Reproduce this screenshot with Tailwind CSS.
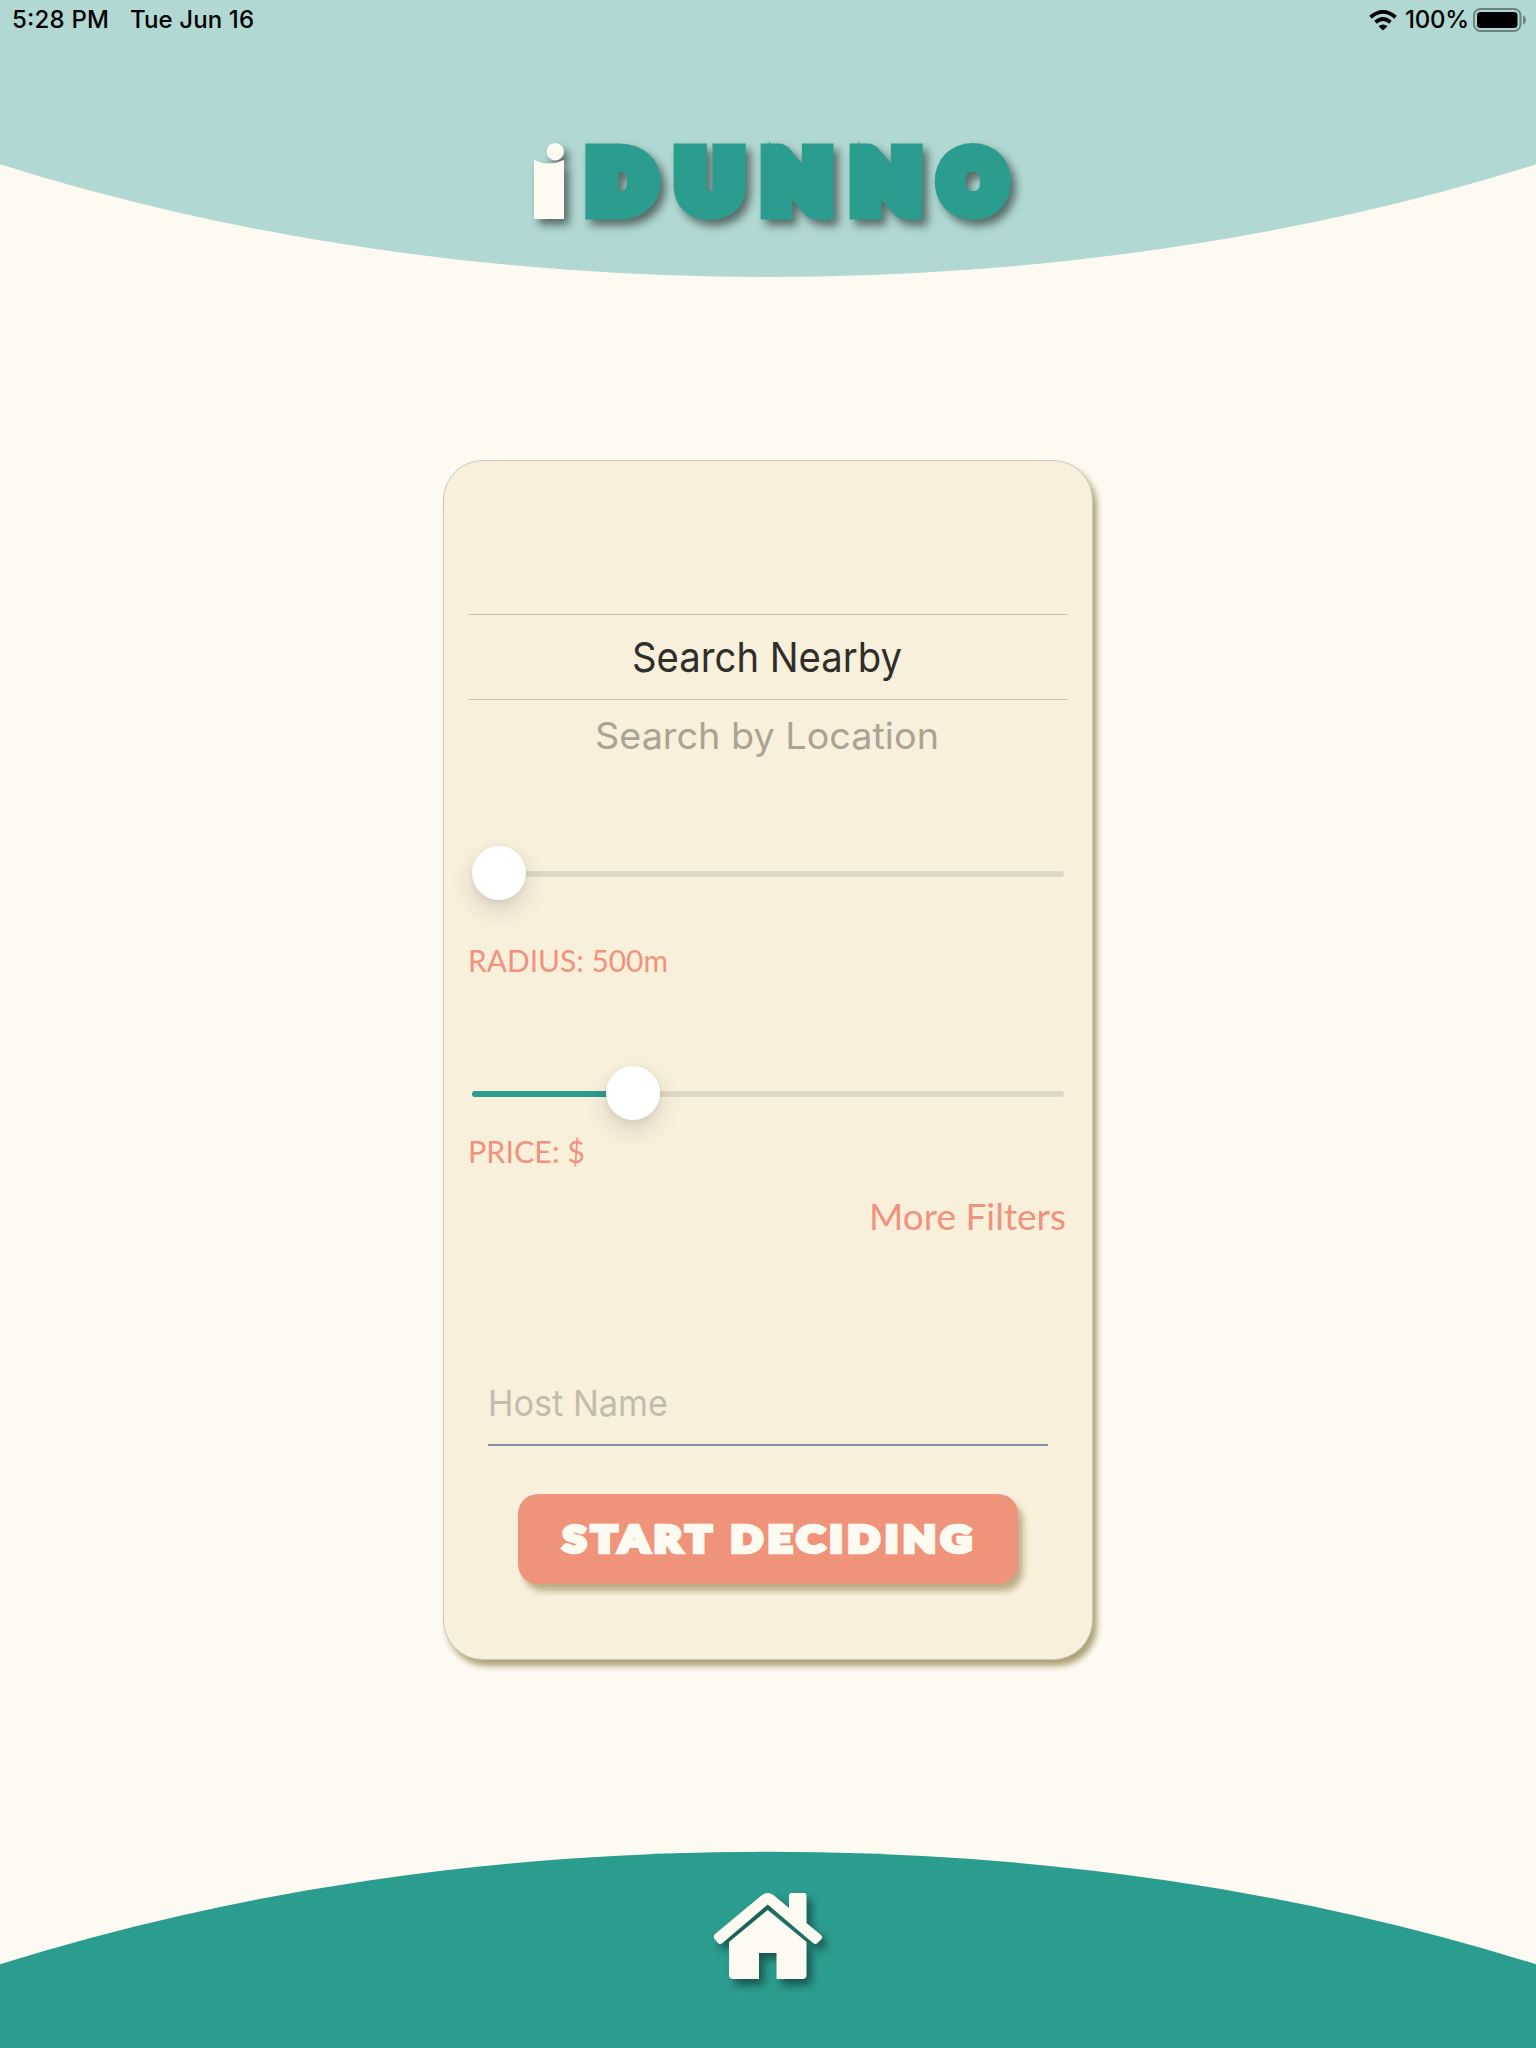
<!DOCTYPE html>
<html lang="en">
<head>
<meta charset="utf-8">
<title>iDunno</title>
<script src="https://cdn.jsdelivr.net/npm/@tailwindcss/browser@4"></script>
</head>
<body class="w-[1536px] h-[2048px] overflow-hidden bg-[#fdfaf2] font-[Inter,sans-serif] flex flex-col items-center">
<header class="relative w-full h-[460px] shrink-0">
  <svg class="absolute inset-0" width="1536" height="460" viewBox="0 0 1536 460">
    <path d="M0 0H1536V164.300A1536 841 0 0 1 0 164.300Z" fill="#b1d8d2"/>
  </svg>
  <div class="relative flex h-10 items-center justify-between pl-[12px] pr-[10px] text-black">
    <svg class="overflow-visible" width="260" height="40"><g font-family="Inter" font-size="24" font-weight="500"><text x="0" y="28" textLength="97">5:28 PM</text><text x="118" y="28" textLength="124">Tue Jun 16</text></g></svg>
    <svg class="overflow-visible" width="160" height="40" viewBox="1366 0 160 40">
      <g fill="none" stroke="#000" stroke-width="3.8"><path d="M1370.500 17.200Q1383 6.500 1395.500 17.200"/><path d="M1375.500 22.300Q1383 15.800 1390.500 22.300"/></g>
      <path d="M1378.500 26.200Q1383 22.800 1387.500 26.200L1383 30.500Z"/>
      <text x="1405" y="28" font-family="Inter" font-size="24" font-weight="500" textLength="64">100%</text>
      <rect x="1474" y="9" width="46.500" height="22" rx="6.500" fill="none" stroke="#6b8480" stroke-width="2"/>
      <rect x="1477" y="12" width="40.500" height="16" rx="3.500"/>
      <path d="M1523 15.500Q1526 17 1526 20T1523 24.500Z" fill="#6b8480"/>
    </svg>
  </div>
  <svg class="absolute left-[500px] top-[120px] overflow-visible [filter:drop-shadow(5px_6px_4px_rgb(0_0_0/0.5))]" width="540" height="130" viewBox="500 120 540 130" font-family="Lato" font-weight="900" font-size="78" stroke-width="19">
    <clipPath id="stem"><path d="M534 160Q549 167 564 160V219H534Z"/></clipPath>
    <g fill="#2b9d8e" stroke="#2b9d8e">
      <text transform="scale(1.08 1)" x="545.6 628 707.8 790.2" y="210.300">DUNN</text>
      <text transform="scale(0.99 1)" x="951" y="210.300">O</text>
    </g>
    <g clip-path="url(#stem)"><text x="537" y="213" font-size="84" fill="#fdfaf2" stroke="#fdfaf2" stroke-width="21">ı</text></g>
    <circle cx="555.300" cy="151.700" r="8.700" fill="#fdfaf2"/>
  </svg>
</header>

<main class="relative w-[650px] h-[1200px] shrink-0 rounded-[40px] border border-[#c8c9c4] bg-[#f9f0dc] shadow-[4px_6px_6px_#ada173] px-6 flex flex-col">
  <section class="mt-[153px] h-[86px] border-y border-[#c8c1b0]">
    <svg class="block overflow-visible" width="600" height="84"><text x="164" y="57" font-family="Inter" font-size="41.500" textLength="270" lengthAdjust="spacingAndGlyphs" fill="#2f2e2a">Search Nearby</text></svg>
  </section>
  <svg class="block overflow-visible" width="600" height="76"><text x="127" y="49" font-family="Inter" font-size="36.500" textLength="344" lengthAdjust="spacingAndGlyphs" fill="#aaa392">Search by Location</text></svg>

  <div class="relative mt-[71px] ml-1 w-[592px] h-[54px] flex items-center">
    <div class="h-1.5 w-full rounded-full bg-[#dfd8c6]"></div>
    <div class="absolute left-0 top-[-1px] size-[54px] rounded-full bg-white shadow-[0_10px_24px_rgb(0_0_0/0.14),0_2px_6px_rgb(0_0_0/0.06)]"></div>
  </div>
  <svg class="block mt-[45px] overflow-visible" width="600" height="40"><text x="0" y="26" font-family="Lato" font-size="30" textLength="200" lengthAdjust="spacingAndGlyphs" fill="#f0937d">RADIUS: 500m</text></svg>
  <div class="relative mt-[81px] ml-1 w-[592px] h-[54px] flex items-center">
    <div class="h-1.5 w-full rounded-full bg-[#dfd8c6]"><div class="h-full w-[161px] rounded-full bg-[#2b9d8e]"></div></div>
    <div class="absolute left-[134px] top-[-1px] size-[54px] rounded-full bg-white shadow-[0_10px_24px_rgb(0_0_0/0.14),0_2px_6px_rgb(0_0_0/0.06)]"></div>
  </div>
  <svg class="block mt-[16px] overflow-visible" width="600" height="40"><text x="0" y="26" font-family="Lato" font-size="30" textLength="117" lengthAdjust="spacingAndGlyphs" fill="#f0937d">PRICE: $</text></svg>
  <svg class="block mt-[26px] overflow-visible" width="600" height="44"><text x="401" y="27" font-family="Lato" font-size="36" textLength="197" lengthAdjust="spacingAndGlyphs" fill="#f0937d">More Filters</text></svg>
  <div class="mx-5 mt-[125px] h-[74px] border-b-2 border-[#8492a6]">
    <svg class="block overflow-visible" width="300" height="60"><text x="0" y="44" font-family="Inter" font-size="36" textLength="180" lengthAdjust="spacingAndGlyphs" fill="#c3bcad">Host Name</text></svg>
  </div>
  <button class="mt-12 ml-[50px] block w-[500px] h-[90px] rounded-[20px] bg-[#ef937b] shadow-[5px_7px_6px_#bcae86]">
    <svg class="block" width="500" height="90"><text transform="scale(1.18 1)" x="38.200" y="58" font-family="Lato" font-weight="900" font-size="35.500" textLength="346" fill="#fdfaf2" stroke="#fdfaf2" stroke-width="4.500">START DECIDING</text></svg>
  </button>
</main>

<footer class="mt-auto h-[198px] w-full shrink-0">
  <svg class="block" width="1536" height="198" viewBox="0 1850 1536 198">
    <path d="M0 1964.300A1536 841 0 0 1 1536 1964.300V2048H0Z" fill="#2b9d8e"/>
    <g class="[filter:drop-shadow(5px_6px_4px_rgb(0_0_0/0.45))]" fill="#fdfaf2">
      <path d="M714.500 1934.500L762 1895Q767.500 1891 773.500 1895L789 1908V1895.500Q789 1893 791.500 1893H804Q806.500 1893 806.500 1895.500V1923L821 1935Q823 1937 821.500 1939L817.500 1943Q815.500 1945 813 1943L767.700 1904.500L722.500 1943Q720 1945 718 1943L714.500 1939Q713 1937 714.500 1934.500Z"/>
      <path d="M767.700 1910L806.500 1942V1975Q806.500 1979 802.500 1979H776.500V1953H759V1979H733Q729 1979 729 1975V1942Z"/>
    </g>
  </svg>
</footer>
</body>
</html>
